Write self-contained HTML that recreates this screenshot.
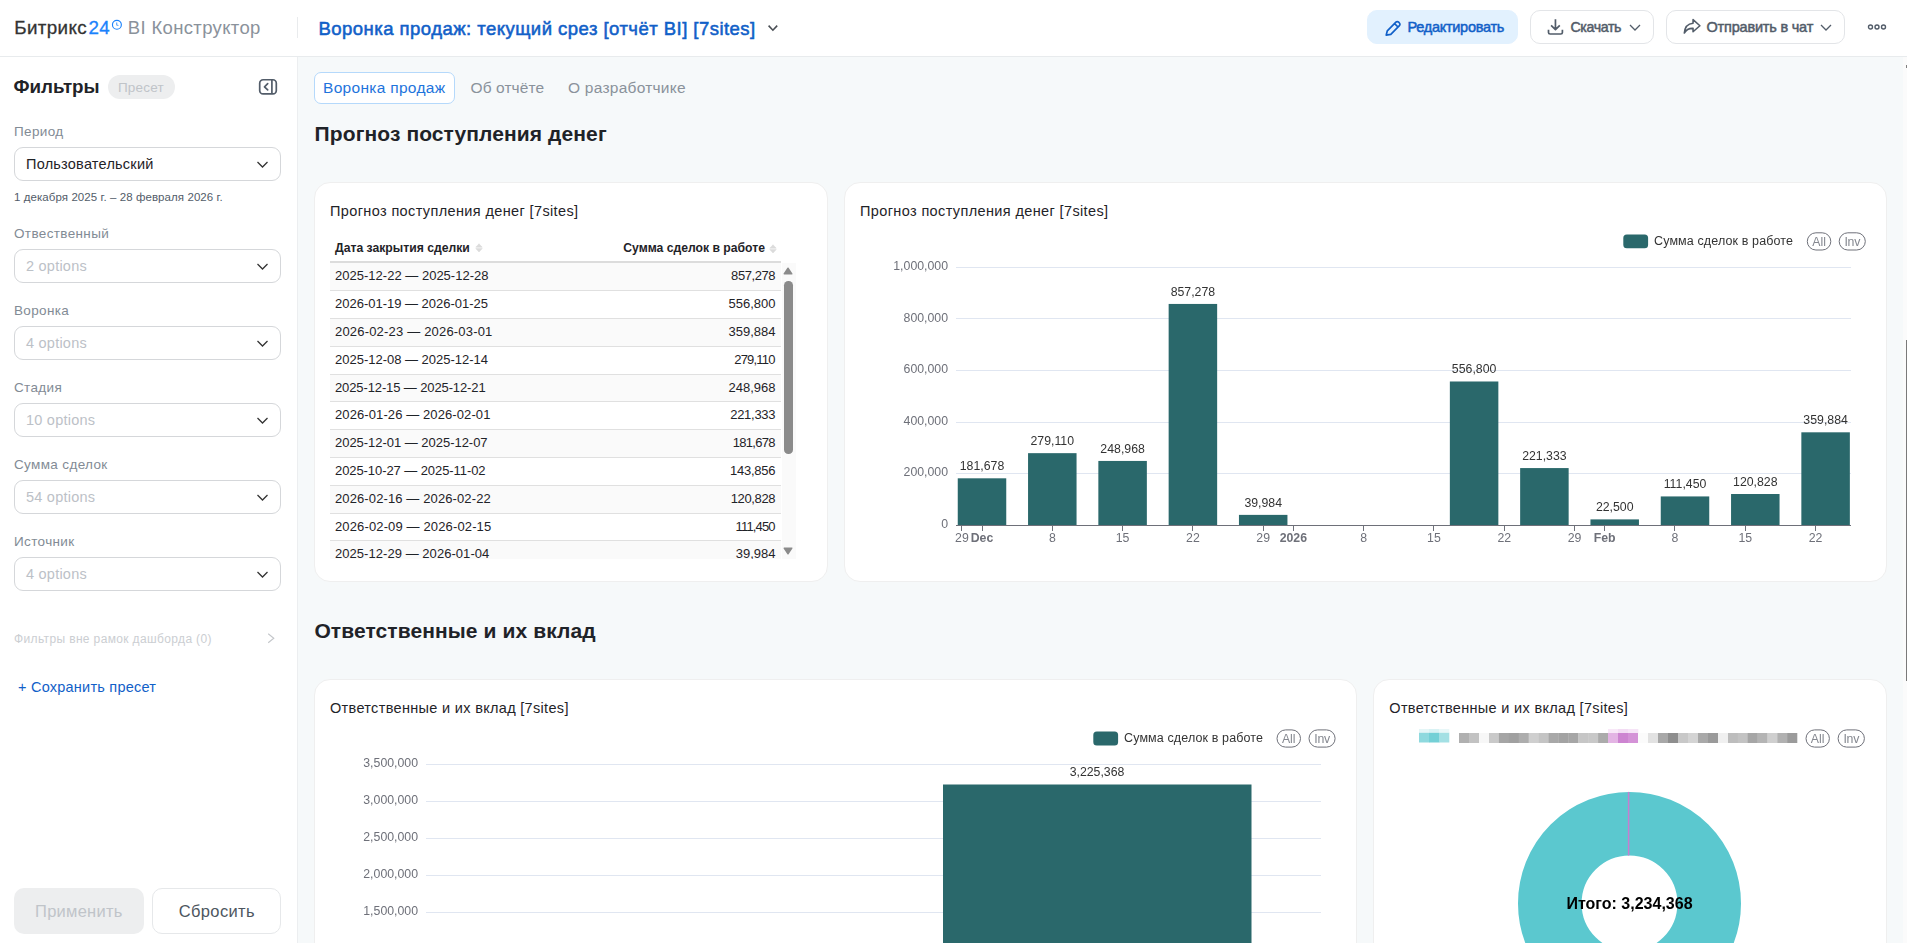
<!DOCTYPE html>
<html lang="ru">
<head>
<meta charset="utf-8">
<title>BI Конструктор</title>
<style>
*{box-sizing:border-box;margin:0;padding:0}
html,body{width:1907px;height:943px;overflow:hidden;background:#f6f9fa;font-family:"Liberation Sans",sans-serif;color:#1f2328}
.abs{position:absolute}
.t{position:absolute;white-space:nowrap;line-height:1}
#hdr{position:absolute;left:0;top:0;width:1907px;height:57px;background:#fff;border-bottom:1px solid #e8ebed}
#side{position:absolute;left:0;top:57px;width:298px;height:886px;background:#fff;border-right:1px solid #eceef0}
#main{position:absolute;left:298px;top:57px;width:1609px;height:886px;background:#f6f9fa;overflow:hidden}
.card{position:absolute;background:#fff;border:1px solid #efefef;border-radius:16px}
.sel{position:absolute;left:14px;width:267px;height:34px;border:1px solid #d5d7da;border-radius:9px;background:#fff}
.sel span{position:absolute;left:11px;top:9px;font-size:14.5px;letter-spacing:0.23px;line-height:1;white-space:nowrap}
.sel svg{position:absolute;left:241px;top:11.5px}
.lbl{position:absolute;left:14px;font-size:13.5px;letter-spacing:0.36px;margin-top:-0.4px;line-height:1;color:#828b95;white-space:nowrap}
.ph{color:#bcc1c7}
.btn{position:absolute;top:10px;height:34px;border-radius:10px;border:1px solid #e3e5e8;background:#fff}
.pill{position:absolute;height:18px;border:1px solid #6e7079;border-radius:9px;font-size:12px;line-height:16px;color:#8a8d93;text-align:center}
.ct{font-size:14.5px;letter-spacing:0.37px;color:#1f2328}
.th{font-size:12.2px;font-weight:bold;color:#1f2328}
.td{font-size:13px;color:#1f2328}
</style>
</head>
<body>

<!-- ================= HEADER ================= -->
<div id="hdr">
  <div class="t" id="logo1" style="left:14.2px;top:18.7px;font-size:18.8px;letter-spacing:0.37px;color:#333;-webkit-text-stroke:0.3px #333">Битрикс</div>
  <div class="t" id="logo2" style="left:88.6px;top:18.7px;font-size:18.8px;letter-spacing:0.3px;color:#1a82fc;-webkit-text-stroke:0.3px #1a82fc">24</div>
  <svg class="abs" style="left:110px;top:18px" width="14" height="14" viewBox="0 0 14 14"><circle cx="6.9" cy="6.8" r="4.45" fill="none" stroke="#1a82fc" stroke-width="1.15"/><path d="M6.7 4.6V6.9L8.4 7.5" fill="none" stroke="#1a82fc" stroke-opacity="0.75" stroke-width="1.1" stroke-linejoin="round"/></svg>
  <div class="t" id="logo3" style="left:127.8px;top:19.4px;font-size:18.5px;letter-spacing:0.34px;color:#8a929b">BI Конструктор</div>
  <div class="abs" style="left:297px;top:17px;width:1px;height:21px;background:#e9ebed"></div>
  <div class="t" id="title" style="left:318.5px;top:20px;font-size:18.5px;letter-spacing:0.465px;color:#1160c8;-webkit-text-stroke:0.55px #1160c8">Воронка продаж: текущий срез [отчёт BI] [7sites]</div>
  <svg class="abs" style="left:766px;top:23px" width="14" height="11" viewBox="0 0 14 11"><path d="M2.6 2.6L6.9 7.2L11.2 2.6" fill="none" stroke="#4a4f55" stroke-width="1.6"/></svg>

  <div class="btn" style="left:1367px;width:151px;background:#e2f1fe;border-color:#e2f1fe">
    <svg class="abs" style="left:16px;top:7.3px" width="20" height="20" viewBox="0 0 20 20"><path d="M2.2 17.2L3.3 12.8L11.9 4.2a1.9 1.9 0 0 1 2.7 0l.8.8a1.9 1.9 0 0 1 0 2.7L6.8 16.3Z M10.6 5.6l3.4 3.4" fill="none" stroke="#1160c8" stroke-width="1.7" stroke-linejoin="round"/></svg>
    <div class="t" id="b1" style="left:39.5px;top:9.1px;font-size:14.5px;letter-spacing:-0.28px;color:#1160c8;-webkit-text-stroke:0.5px #1160c8">Редактировать</div>
  </div>
  <div class="btn" style="left:1530px;width:124px">
    <svg class="abs" style="left:15px;top:7px" width="20" height="20" viewBox="0 0 20 20"><path d="M9.45 1.3V11.4M5.1 7.4L9.45 11.7L13.8 7.4M2.5 11.8V14.4a1.6 1.6 0 0 0 1.6 1.6H14.8a1.6 1.6 0 0 0 1.6-1.6V11.8" fill="none" stroke="#525c69" stroke-width="1.7" stroke-linejoin="round"/></svg>
    <div class="t" id="b2" style="left:39.5px;top:9.2px;font-size:14.2px;letter-spacing:-0.38px;color:#525c69;-webkit-text-stroke:0.5px #525c69">Скачать</div>
    <svg class="abs" style="left:98px;top:12px" width="12" height="9" viewBox="0 0 12 9"><path d="M1 2L6 7L11 2" fill="none" stroke="#525c69" stroke-width="1.3"/></svg>
  </div>
  <div class="btn" style="left:1666px;width:179px">
    <svg class="abs" style="left:14.6px;top:6px" width="20" height="18.95" viewBox="0 0 19 18"><path d="M10.5 2.5L17 8.3L10.5 14V10.8C6.5 10.6 4 12 2.2 15.2C2.6 10 5 6.4 10.5 5.9Z" fill="none" stroke="#525c69" stroke-width="1.5" stroke-linejoin="round"/></svg>
    <div class="t" id="b3" style="left:39.5px;top:9.1px;font-size:14.5px;letter-spacing:-0.2px;color:#525c69;-webkit-text-stroke:0.5px #525c69">Отправить в чат</div>
    <svg class="abs" style="left:153px;top:12px" width="12" height="9" viewBox="0 0 12 9"><path d="M1 2L6 7L11 2" fill="none" stroke="#525c69" stroke-width="1.3"/></svg>
  </div>
  <svg class="abs" style="left:1867px;top:23px" width="20" height="8" viewBox="0 0 20 8"><g fill="none" stroke="#525c69" stroke-width="1.4"><circle cx="3.5" cy="4" r="2"/><circle cx="10" cy="4" r="2"/><circle cx="16.5" cy="4" r="2"/></g></svg>
</div>

<!-- ================= SIDEBAR ================= -->
<div id="side">
  <div class="t" id="flt" style="left:13.5px;top:20.6px;font-size:18.8px;font-weight:bold;color:#1f2328">Фильтры</div>
  <div class="abs" style="left:108px;top:18px;width:67px;height:24px;border-radius:12px;background:#edeeef"></div>
  <div class="t" id="preset" style="left:118px;top:23.8px;font-size:13.5px;letter-spacing:0.17px;color:#c0c4c9">Пресет</div>
  <svg class="abs" style="left:258px;top:21px" width="20" height="18" viewBox="0 0 20 18"><rect x="1.7" y="1.75" width="16.6" height="14.1" rx="3.4" fill="none" stroke="#525c69" stroke-width="1.7"/><path d="M13.9 2V15.6" stroke="#525c69" stroke-width="1.7"/><path d="M9.7 5.7L6.5 8.8L9.7 11.9" fill="none" stroke="#525c69" stroke-width="1.7" stroke-linecap="round" stroke-linejoin="round"/></svg>

  <div class="lbl" style="top:68px">Период</div>
  <div class="sel" style="top:90px"><span style="color:#1f2328">Пользовательский</span><svg width="13" height="9" viewBox="0 0 13 9"><path d="M1.5 2L6.5 7L11.5 2" fill="none" stroke="#333" stroke-width="1.25"/></svg></div>
  <div class="t" id="dates" style="left:14px;top:135.2px;font-size:11.5px;letter-spacing:0.075px;color:#525c69">1 декабря 2025 г. – 28 февраля 2026 г.</div>

  <div class="lbl" style="top:170px">Отвественный</div>
  <div class="sel" style="top:192px"><span class="ph">2 options</span><svg width="13" height="9" viewBox="0 0 13 9"><path d="M1.5 2L6.5 7L11.5 2" fill="none" stroke="#333" stroke-width="1.25"/></svg></div>

  <div class="lbl" style="top:247px">Воронка</div>
  <div class="sel" style="top:269px"><span class="ph">4 options</span><svg width="13" height="9" viewBox="0 0 13 9"><path d="M1.5 2L6.5 7L11.5 2" fill="none" stroke="#333" stroke-width="1.25"/></svg></div>

  <div class="lbl" style="top:324px">Стадия</div>
  <div class="sel" style="top:346px"><span class="ph">10 options</span><svg width="13" height="9" viewBox="0 0 13 9"><path d="M1.5 2L6.5 7L11.5 2" fill="none" stroke="#333" stroke-width="1.25"/></svg></div>

  <div class="lbl" style="top:401px">Сумма сделок</div>
  <div class="sel" style="top:423px"><span class="ph">54 options</span><svg width="13" height="9" viewBox="0 0 13 9"><path d="M1.5 2L6.5 7L11.5 2" fill="none" stroke="#333" stroke-width="1.25"/></svg></div>

  <div class="lbl" style="top:478px">Источник</div>
  <div class="sel" style="top:500px"><span class="ph">4 options</span><svg width="13" height="9" viewBox="0 0 13 9"><path d="M1.5 2L6.5 7L11.5 2" fill="none" stroke="#333" stroke-width="1.25"/></svg></div>

  <div class="t" id="outf" style="left:14px;top:575.7px;font-size:12px;letter-spacing:0.36px;color:#cbced2">Фильтры вне рамок дашборда (0)</div>
  <svg class="abs" style="left:267px;top:576px" width="9" height="11" viewBox="0 0 9 11"><path d="M1.2 0.8L6.8 5.3L1.2 9.8" fill="none" stroke="#c3c6ca" stroke-width="1.1"/></svg>

  <div class="t" id="save" style="left:18px;top:622.6px;font-size:14.5px;letter-spacing:0.23px;color:#1160c8">+ Сохранить пресет</div>

  <div class="abs" style="left:14px;top:831px;width:130px;height:46px;border-radius:10px;background:#edeeef"></div>
  <div class="t" id="apply" style="left:35px;top:845.7px;font-size:16.5px;letter-spacing:0.27px;color:#c0c4c9">Применить</div>
  <div class="abs" style="left:152px;top:831px;width:129px;height:46px;border-radius:10px;background:#fff;border:1px solid #e6e8ea"></div>
  <div class="t" id="reset" style="left:178.8px;top:845.7px;font-size:16.5px;letter-spacing:0.34px;color:#4d5660">Сбросить</div>
</div>

<!-- ================= MAIN ================= -->
<div id="main">
<div class="abs" style="left:16px;top:15px;width:141px;height:31.5px;border:1px solid #b5d9fb;border-radius:7px;background:#fff"></div>
<div class="t" id="tab1" style="left:25px;top:23.4px;font-size:15.5px;letter-spacing:0.3px;color:#1e74dc">Воронка продаж</div>
<div class="t" id="tab2" style="left:172.5px;top:23.4px;font-size:15.5px;letter-spacing:0.1px;color:#8a929b">Об отчёте</div>
<div class="t" id="tab3" style="left:270px;top:23.4px;font-size:15.5px;letter-spacing:0.25px;color:#8a929b">О разработчике</div>
<div class="t" id="h1" style="left:16.6px;top:65.8px;font-size:21px;letter-spacing:0.1px;font-weight:bold;color:#1f2328">Прогноз поступления денег</div>
<div class="t" id="h2" style="left:16.4px;top:562.8px;font-size:21px;letter-spacing:0.1px;font-weight:bold;color:#1f2328">Ответственные и их вклад</div>
<div class="card" style="left:16px;top:125px;width:514px;height:400px"></div>
<div class="card" style="left:546px;top:125px;width:1043px;height:400px"></div>
<div class="card" style="left:16px;top:622px;width:1043px;height:400px"></div>
<div class="card" style="left:1075px;top:622px;width:514px;height:400px"></div>
<div class="t ct" id="ct1" style="left:32px;top:147px">Прогноз поступления денег [7sites]</div>
<div class="t ct" id="ct2" style="left:562px;top:147px">Прогноз поступления денег [7sites]</div>
<div class="t ct" id="ct3" style="left:32px;top:644px;letter-spacing:0.32px">Ответственные и их вклад [7sites]</div>
<div class="t ct" id="ct4" style="left:1091.3px;top:644px;letter-spacing:0.32px">Ответственные и их вклад [7sites]</div>
<div class="abs" id="tbl" style="left:32px;top:176px;width:466px;height:326px;overflow:hidden">
<div class="t th" id="th1" style="left:5px;top:8.8px">Дата закрытия сделки</div>
<svg class="abs" style="left:144.8px;top:10.3px" width="8" height="10" viewBox="0 0 8 10"><path d="M0.8 4.2L4 0.8L7.2 4.2Z M0.8 5.6L4 9L7.2 5.6Z" fill="#dcdcdc" stroke="#dcdcdc" stroke-width="0.6" stroke-linejoin="round"/></svg>
<div class="t th" id="th2" style="right:31px;top:8.8px">Сумма сделок в работе</div>
<svg class="abs" style="left:439px;top:10.5px" width="8" height="10" viewBox="0 0 8 10"><path d="M0.8 4.2L4 0.8L7.2 4.2Z M0.8 5.6L4 9L7.2 5.6Z" fill="#dcdcdc" stroke="#dcdcdc" stroke-width="0.6" stroke-linejoin="round"/></svg>
<div class="abs" style="left:0;top:28.2px;width:451px;height:1.8px;background:#dcdcdc"></div>
<div class="abs" style="left:0;top:30.00px;width:451px;height:28px;background:#fafafa;border-bottom:1px solid #e0e0e0"></div>
<div class="t td" style="left:5px;top:36.00px;letter-spacing:0.013px">2025-12-22 — 2025-12-28</div>
<div class="t td" style="right:20.5px;top:36.00px;letter-spacing:-0.429px;margin-right:0.429px">857,278</div>
<div class="abs" style="left:0;top:58.00px;width:451px;height:28px;background:#fff;border-bottom:1px solid #e0e0e0"></div>
<div class="t td" style="left:5px;top:64.00px;letter-spacing:-0.009px">2026-01-19 — 2026-01-25</div>
<div class="t td" style="right:20.5px;top:64.00px;letter-spacing:0.000px;margin-right:-0.000px">556,800</div>
<div class="abs" style="left:0;top:86.00px;width:451px;height:28px;background:#fafafa;border-bottom:1px solid #e0e0e0"></div>
<div class="t td" style="left:5px;top:92.00px;letter-spacing:0.187px">2026-02-23 — 2026-03-01</div>
<div class="t td" style="right:20.5px;top:92.00px;letter-spacing:0.000px;margin-right:-0.000px">359,884</div>
<div class="abs" style="left:0;top:114.00px;width:451px;height:28px;background:#fff;border-bottom:1px solid #e0e0e0"></div>
<div class="t td" style="left:5px;top:120.00px;letter-spacing:-0.009px">2025-12-08 — 2025-12-14</div>
<div class="t td" style="right:20.5px;top:120.00px;letter-spacing:-0.786px;margin-right:0.786px">279,110</div>
<div class="abs" style="left:0;top:142.00px;width:451px;height:27px;background:#fafafa;border-bottom:1px solid #e0e0e0"></div>
<div class="t td" style="left:5px;top:148.00px;letter-spacing:-0.117px">2025-12-15 — 2025-12-21</div>
<div class="t td" style="right:20.5px;top:148.00px;letter-spacing:0.000px;margin-right:-0.000px">248,968</div>
<div class="abs" style="left:0;top:169.00px;width:451px;height:28px;background:#fff;border-bottom:1px solid #e0e0e0"></div>
<div class="t td" style="left:5px;top:175.00px;letter-spacing:0.100px">2026-01-26 — 2026-02-01</div>
<div class="t td" style="right:20.5px;top:175.00px;letter-spacing:-0.286px;margin-right:0.286px">221,333</div>
<div class="abs" style="left:0;top:197.00px;width:451px;height:28px;background:#fafafa;border-bottom:1px solid #e0e0e0"></div>
<div class="t td" style="left:5px;top:203.00px;letter-spacing:-0.030px">2025-12-01 — 2025-12-07</div>
<div class="t td" style="right:20.5px;top:203.00px;letter-spacing:-0.714px;margin-right:0.714px">181,678</div>
<div class="abs" style="left:0;top:225.00px;width:451px;height:28px;background:#fff;border-bottom:1px solid #e0e0e0"></div>
<div class="t td" style="left:5px;top:231.00px;letter-spacing:-0.078px">2025-10-27 — 2025-11-02</div>
<div class="t td" style="right:20.5px;top:231.00px;letter-spacing:-0.243px;margin-right:0.243px">143,856</div>
<div class="abs" style="left:0;top:253.00px;width:451px;height:28px;background:#fafafa;border-bottom:1px solid #e0e0e0"></div>
<div class="t td" style="left:5px;top:259.00px;letter-spacing:0.113px">2026-02-16 — 2026-02-22</div>
<div class="t td" style="right:20.5px;top:259.00px;letter-spacing:-0.371px;margin-right:0.371px">120,828</div>
<div class="abs" style="left:0;top:281.00px;width:451px;height:27px;background:#fff;border-bottom:1px solid #e0e0e0"></div>
<div class="t td" style="left:5px;top:287.00px;letter-spacing:0.135px">2026-02-09 — 2026-02-15</div>
<div class="t td" style="right:20.5px;top:287.00px;letter-spacing:-0.857px;margin-right:0.857px">111,450</div>
<div class="abs" style="left:0;top:308.00px;width:451px;height:28px;background:#fafafa;border-bottom:1px solid #e0e0e0"></div>
<div class="t td" style="left:5px;top:314.00px;letter-spacing:0.048px">2025-12-29 — 2026-01-04</div>
<div class="t td" style="right:20.5px;top:314.00px;letter-spacing:0.000px;margin-right:-0.000px">39,984</div>
<div class="abs" style="left:451.5px;top:30px;width:14.3px;height:296px;background:#fafafa"></div>
<div class="abs" style="left:454.4px;top:48px;width:8.6px;height:172.5px;border-radius:4.3px;background:#8b8b8b"></div>
<svg class="abs" style="left:453.3px;top:34.1px" width="10" height="8" viewBox="0 0 10 8"><path d="M1.2 6.8L5 1.2L8.8 6.8Z" fill="#8b8b8b" stroke="#8b8b8b" stroke-width="1.4" stroke-linejoin="round"/></svg>
<svg class="abs" style="left:453.3px;top:314.2px" width="10" height="8" viewBox="0 0 10 8"><path d="M1.2 1.2L5 6.8L8.8 1.2Z" fill="#8b8b8b" stroke="#8b8b8b" stroke-width="1.4" stroke-linejoin="round"/></svg>
</div>
<svg class="abs" style="left:0;top:0;will-change:transform" width="1609" height="886" viewBox="298 57 1609 886" font-family="Liberation Sans, sans-serif" font-size="12.3">
<path d="M956 473.5H1851" stroke="#e0e6f1" stroke-width="1"/>
<path d="M956 422.5H1851" stroke="#e0e6f1" stroke-width="1"/>
<path d="M956 370.5H1851" stroke="#e0e6f1" stroke-width="1"/>
<path d="M956 318.5H1851" stroke="#e0e6f1" stroke-width="1"/>
<path d="M956 267.5H1851" stroke="#e0e6f1" stroke-width="1"/>
<text x="948" y="528.00" text-anchor="end" fill="#6e7079">0</text>
<text x="948" y="476.38" text-anchor="end" fill="#6e7079">200,000</text>
<text x="948" y="424.76" text-anchor="end" fill="#6e7079">400,000</text>
<text x="948" y="373.14" text-anchor="end" fill="#6e7079">600,000</text>
<text x="948" y="321.52" text-anchor="end" fill="#6e7079">800,000</text>
<text x="948" y="269.90" text-anchor="end" fill="#6e7079">1,000,000</text>
<rect x="957.75" y="478.31" width="48.5" height="46.89" fill="#2a686b"/>
<text x="982.00" y="470.01" text-anchor="middle" fill="#333">181,678</text>
<rect x="1028.05" y="453.16" width="48.5" height="72.04" fill="#2a686b"/>
<text x="1052.30" y="444.86" text-anchor="middle" fill="#333">279,110</text>
<rect x="1098.35" y="460.94" width="48.5" height="64.26" fill="#2a686b"/>
<text x="1122.60" y="452.64" text-anchor="middle" fill="#333">248,968</text>
<rect x="1168.65" y="303.94" width="48.5" height="221.26" fill="#2a686b"/>
<text x="1192.90" y="295.64" text-anchor="middle" fill="#333">857,278</text>
<rect x="1238.95" y="514.88" width="48.5" height="10.32" fill="#2a686b"/>
<text x="1263.20" y="506.58" text-anchor="middle" fill="#333">39,984</text>
<rect x="1449.85" y="381.49" width="48.5" height="143.71" fill="#2a686b"/>
<text x="1474.10" y="373.19" text-anchor="middle" fill="#333">556,800</text>
<rect x="1520.15" y="468.07" width="48.5" height="57.13" fill="#2a686b"/>
<text x="1544.40" y="459.77" text-anchor="middle" fill="#333">221,333</text>
<rect x="1590.45" y="519.39" width="48.5" height="5.81" fill="#2a686b"/>
<text x="1614.70" y="511.09" text-anchor="middle" fill="#333">22,500</text>
<rect x="1660.75" y="496.43" width="48.5" height="28.77" fill="#2a686b"/>
<text x="1685.00" y="488.13" text-anchor="middle" fill="#333">111,450</text>
<rect x="1731.05" y="494.01" width="48.5" height="31.19" fill="#2a686b"/>
<text x="1755.30" y="485.71" text-anchor="middle" fill="#333">120,828</text>
<rect x="1801.35" y="432.31" width="48.5" height="92.89" fill="#2a686b"/>
<text x="1825.60" y="424.01" text-anchor="middle" fill="#333">359,884</text>
<path d="M956 525.5H1851" stroke="#6e7079" stroke-width="1"/>
<path d="M961.5 525.5V531.0" stroke="#6e7079" stroke-width="1"/>
<text x="961.91" y="542.1" text-anchor="middle" fill="#6e7079">29</text>
<path d="M982.5 525.5V531.0" stroke="#6e7079" stroke-width="1"/>
<text x="982.00" y="542.1" text-anchor="middle" fill="#6e7079" font-weight="bold">Dec</text>
<path d="M1052.5 525.5V531.0" stroke="#6e7079" stroke-width="1"/>
<text x="1052.30" y="542.1" text-anchor="middle" fill="#6e7079">8</text>
<path d="M1122.5 525.5V531.0" stroke="#6e7079" stroke-width="1"/>
<text x="1122.60" y="542.1" text-anchor="middle" fill="#6e7079">15</text>
<path d="M1192.5 525.5V531.0" stroke="#6e7079" stroke-width="1"/>
<text x="1192.90" y="542.1" text-anchor="middle" fill="#6e7079">22</text>
<path d="M1263.5 525.5V531.0" stroke="#6e7079" stroke-width="1"/>
<text x="1263.20" y="542.1" text-anchor="middle" fill="#6e7079">29</text>
<path d="M1293.5 525.5V531.0" stroke="#6e7079" stroke-width="1"/>
<text x="1293.33" y="542.1" text-anchor="middle" fill="#6e7079" font-weight="bold">2026</text>
<path d="M1363.5 525.5V531.0" stroke="#6e7079" stroke-width="1"/>
<text x="1363.63" y="542.1" text-anchor="middle" fill="#6e7079">8</text>
<path d="M1433.5 525.5V531.0" stroke="#6e7079" stroke-width="1"/>
<text x="1433.93" y="542.1" text-anchor="middle" fill="#6e7079">15</text>
<path d="M1504.5 525.5V531.0" stroke="#6e7079" stroke-width="1"/>
<text x="1504.23" y="542.1" text-anchor="middle" fill="#6e7079">22</text>
<path d="M1574.5 525.5V531.0" stroke="#6e7079" stroke-width="1"/>
<text x="1574.53" y="542.1" text-anchor="middle" fill="#6e7079">29</text>
<path d="M1604.5 525.5V531.0" stroke="#6e7079" stroke-width="1"/>
<text x="1604.66" y="542.1" text-anchor="middle" fill="#6e7079" font-weight="bold">Feb</text>
<path d="M1674.5 525.5V531.0" stroke="#6e7079" stroke-width="1"/>
<text x="1674.96" y="542.1" text-anchor="middle" fill="#6e7079">8</text>
<path d="M1745.5 525.5V531.0" stroke="#6e7079" stroke-width="1"/>
<text x="1745.26" y="542.1" text-anchor="middle" fill="#6e7079">15</text>
<path d="M1815.5 525.5V531.0" stroke="#6e7079" stroke-width="1"/>
<text x="1815.56" y="542.1" text-anchor="middle" fill="#6e7079">22</text>
<rect x="1623.3" y="234.5" width="24.8" height="13.8" rx="3.5" fill="#2a686b"/>
<text x="1654" y="245.20000000000002" fill="#333" font-size="12.5" letter-spacing="0.12">Сумма сделок в работе</text>
<rect x="1807.3" y="232.8" width="23.50" height="17.2" rx="8.6" fill="#fff" stroke="#6e7079" stroke-width="1"/>
<text x="1819.05" y="245.70000000000002" text-anchor="middle" fill="#858890">All</text>
<rect x="1839.2" y="232.8" width="26.10" height="17.2" rx="8.6" fill="#fff" stroke="#6e7079" stroke-width="1"/>
<text x="1852.25" y="245.70000000000002" text-anchor="middle" fill="#858890" letter-spacing="-0.3">Inv</text>
<path d="M426 764.5H1321" stroke="#e0e6f1" stroke-width="1"/>
<text x="418" y="766.7" text-anchor="end" fill="#6e7079">3,500,000</text>
<path d="M426 801.5H1321" stroke="#e0e6f1" stroke-width="1"/>
<text x="418" y="803.7" text-anchor="end" fill="#6e7079">3,000,000</text>
<path d="M426 838.5H1321" stroke="#e0e6f1" stroke-width="1"/>
<text x="418" y="840.7" text-anchor="end" fill="#6e7079">2,500,000</text>
<path d="M426 875.5H1321" stroke="#e0e6f1" stroke-width="1"/>
<text x="418" y="877.7" text-anchor="end" fill="#6e7079">2,000,000</text>
<path d="M426 912.5H1321" stroke="#e0e6f1" stroke-width="1"/>
<text x="418" y="914.7" text-anchor="end" fill="#6e7079">1,500,000</text>
<rect x="943" y="784.5" width="308.5" height="200" fill="#2a686b"/>
<text x="1097" y="776" text-anchor="middle" fill="#333">3,225,368</text>
<rect x="1093.3" y="731.6" width="24.8" height="13.8" rx="3.5" fill="#2a686b"/>
<text x="1124" y="742.3" fill="#333" font-size="12.5" letter-spacing="0.12">Сумма сделок в работе</text>
<rect x="1277.0" y="729.9" width="23.50" height="17.2" rx="8.6" fill="#fff" stroke="#6e7079" stroke-width="1"/>
<text x="1288.75" y="742.8" text-anchor="middle" fill="#858890">All</text>
<rect x="1309.0" y="729.9" width="26.10" height="17.2" rx="8.6" fill="#fff" stroke="#6e7079" stroke-width="1"/>
<text x="1322.05" y="742.8" text-anchor="middle" fill="#858890" letter-spacing="-0.3">Inv</text>
<circle cx="1629.5" cy="903.4" r="79.7" fill="none" stroke="#5bc8cf" stroke-width="63.6"/>
<path d="M1628.6 791.9V855.5" stroke="#c77dd0" stroke-width="1.5"/>
<text x="1629.5" y="908.9" text-anchor="middle" font-size="16" font-weight="bold" fill="#000">Итого: 3,234,368</text>
<rect x="1806.0" y="729.9" width="23.40" height="17.2" rx="8.6" fill="#fff" stroke="#6e7079" stroke-width="1"/>
<text x="1817.70" y="742.8" text-anchor="middle" fill="#858890">All</text>
<rect x="1838.1" y="729.9" width="26.30" height="17.2" rx="8.6" fill="#fff" stroke="#6e7079" stroke-width="1"/>
<text x="1851.25" y="742.8" text-anchor="middle" fill="#858890" letter-spacing="-0.3">Inv</text>
<rect x="1419.00" y="732.5" width="10.30" height="10" fill="#8ed9de"/>
<rect x="1429.00" y="732.5" width="10.30" height="10" fill="#74d0d6"/>
<rect x="1439.00" y="732.5" width="10.30" height="10" fill="#a3e0e4"/>
<rect x="1419.00" y="729" width="10.30" height="3.5" fill="#e4f6f7"/>
<rect x="1429.00" y="729" width="10.30" height="3.5" fill="#d8f2f4"/>
<rect x="1439.00" y="729" width="10.30" height="3.5" fill="#e8f7f8"/>
<rect x="1459.00" y="733" width="10.30" height="10" fill="#b0b0b0"/>
<rect x="1469.00" y="733" width="10.30" height="10" fill="#c2c2c2"/>
<rect x="1479.00" y="733" width="10.30" height="10" fill="#f7f7f7"/>
<rect x="1489.00" y="733" width="10.22" height="10" fill="#c9c9c9"/>
<rect x="1498.92" y="733" width="10.22" height="10" fill="#a5a5a5"/>
<rect x="1508.83" y="733" width="10.22" height="10" fill="#a0a0a0"/>
<rect x="1518.75" y="733" width="10.22" height="10" fill="#adadad"/>
<rect x="1528.67" y="733" width="10.22" height="10" fill="#cfcfcf"/>
<rect x="1538.58" y="733" width="10.22" height="10" fill="#c4c4c4"/>
<rect x="1548.50" y="733" width="10.22" height="10" fill="#a8a8a8"/>
<rect x="1558.42" y="733" width="10.22" height="10" fill="#a3a3a3"/>
<rect x="1568.33" y="733" width="10.22" height="10" fill="#a6a6a6"/>
<rect x="1578.25" y="733" width="10.22" height="10" fill="#c6c6c6"/>
<rect x="1588.17" y="733" width="10.22" height="10" fill="#c8c8c8"/>
<rect x="1598.08" y="733" width="10.22" height="10" fill="#ababab"/>
<rect x="1608.00" y="733" width="10.30" height="10" fill="#e3b4e4"/>
<rect x="1618.00" y="733" width="10.30" height="10" fill="#cd84d1"/>
<rect x="1628.00" y="733" width="10.30" height="10" fill="#d492d7"/>
<rect x="1608.00" y="729" width="10.30" height="4" fill="#f8e8f8"/>
<rect x="1618.00" y="729" width="10.30" height="4" fill="#f3dcf4"/>
<rect x="1628.00" y="729" width="10.30" height="4" fill="#f6e4f7"/>
<rect x="1638.00" y="733" width="10.30" height="10" fill="#fbfbfb"/>
<rect x="1648.00" y="733" width="10.30" height="10" fill="#e2e2e2"/>
<rect x="1658.00" y="733" width="10.30" height="10" fill="#a8a8a8"/>
<rect x="1668.00" y="733" width="10.30" height="10" fill="#8e8e8e"/>
<rect x="1678.00" y="733" width="10.30" height="10" fill="#c8c8c8"/>
<rect x="1688.00" y="733" width="10.30" height="10" fill="#d4d4d4"/>
<rect x="1698.00" y="733" width="10.30" height="10" fill="#a9a9a9"/>
<rect x="1708.00" y="733" width="10.30" height="10" fill="#9a9a9a"/>
<rect x="1718.00" y="733" width="10.30" height="10" fill="#f0f0f0"/>
<rect x="1728.00" y="733" width="10.16" height="10" fill="#bdbdbd"/>
<rect x="1737.86" y="733" width="10.16" height="10" fill="#c3c3c3"/>
<rect x="1747.71" y="733" width="10.16" height="10" fill="#a6a6a6"/>
<rect x="1757.57" y="733" width="10.16" height="10" fill="#b4b4b4"/>
<rect x="1767.43" y="733" width="10.16" height="10" fill="#cfcfcf"/>
<rect x="1777.29" y="733" width="10.16" height="10" fill="#b1b1b1"/>
<rect x="1787.14" y="733" width="10.16" height="10" fill="#9b9b9b"/>
</svg>
<div class="abs" style="left:1605px;top:0;width:4px;height:886px;background:#fbfbfb"></div>
<div class="abs" style="left:1608px;top:8px;width:1px;height:3px;background:#808080"></div>
<div class="abs" style="left:1608px;top:283px;width:1px;height:341px;background:#7a7a7a"></div>
</div>

</body>
</html>
